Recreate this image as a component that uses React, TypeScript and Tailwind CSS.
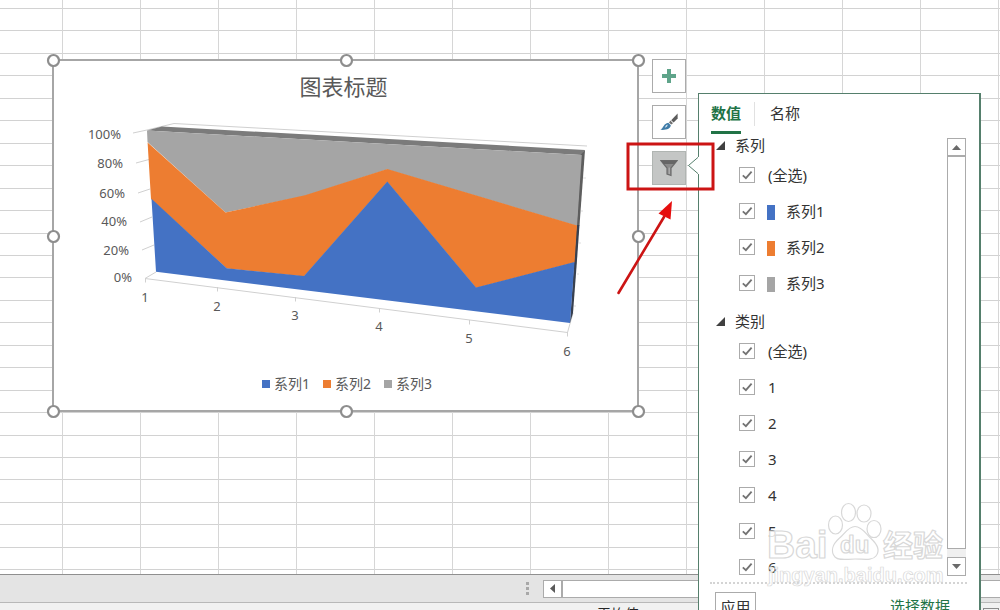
import type { ReactNode } from "react";

const ROW_STEP = 22.45;
const rowEdges = Array.from({ length: 28 }, (_, i) => Math.round(8 + i * ROW_STEP));
const rowHeights = rowEdges.map((edge, i) => (i === 0 ? edge + 1 : edge - rowEdges[i - 1]));
const columns = Array.from({ length: 24 }, (_, i) => i);

function Gridlines() {
  return (
    <div aria-hidden="true" className="absolute inset-0 overflow-hidden">
      {rowHeights.map((height, i) => (
        <div key={i} className="border-b border-[#d2d2d2]" style={{ height }} />
      ))}
      <div className="absolute inset-0 flex">
        <div className="w-[63px] shrink-0 border-r border-[#d6d6d6]" />
        {columns.map((c) => (
          <div key={c} className="w-[78px] shrink-0 border-r border-[#d6d6d6]" />
        ))}
      </div>
    </div>
  );
}

const valueLabels = [
  { text: "100%", x: 121, y: 139 },
  { text: "80%", x: 123, y: 168 },
  { text: "60%", x: 125, y: 198 },
  { text: "40%", x: 127, y: 226 },
  { text: "20%", x: 129, y: 255 },
  { text: "0%", x: 132, y: 282 },
];

const categoryLabels = [
  { text: "1", x: 145, y: 302, tick: 278 },
  { text: "2", x: 217, y: 311, tick: 287 },
  { text: "3", x: 295, y: 320, tick: 297 },
  { text: "4", x: 379, y: 331, tick: 308 },
  { text: "5", x: 469, y: 343, tick: 320 },
  { text: "6", x: 567, y: 356, tick: 332 },
];

const handles = [
  [53, 60], [346, 60], [638, 60],
  [53, 236], [638, 236],
  [53, 411], [346, 411], [638, 411],
];

const legend = [
  { name: "系列1", color: "bg-[#4472c4]" },
  { name: "系列2", color: "bg-[#ed7d31]" },
  { name: "系列3", color: "bg-[#a5a5a5]" },
];

function Chart() {
  return (
    <section
      aria-label="图表标题"
      className="absolute left-[52px] top-[59px] flex h-[353px] w-[587px] flex-col items-center justify-between border-2 border-[#a6a6a6] bg-white pt-[7px] pb-4 text-[#595959]"
    >
      <h1 className="pr-1 text-[22px] leading-9">图表标题</h1>
      <ul className="flex gap-[13px] pl-[3px] text-sm leading-5">
        {legend.map((item) => (
          <li key={item.name} className="flex items-center gap-1">
            <span className={`size-2 ${item.color}`} />
            {item.name}
          </li>
        ))}
      </ul>
      <svg
        viewBox="40 50 610 372"
        className="absolute -left-[14px] -top-[11px] h-[372px] w-[610px]"
        fill="none"
      >
        <g stroke="#d0d0d0">
          <path d="M133 133L147 130L174 123.5L587 146" />
          <path d="M136 163L149 159.5M138 193L150 189M140 222L152 217M142 250L154 245" />
          <path d="M156 272L145 278.5L567.5 332.5L573 313" />
          <path d="M583 178h3M581 211h2M579 243h2M577 274h2M574 306h2" strokeOpacity=".7" />
          {categoryLabels.map((c) => (
            <path key={c.text} d={`M${c.x + 0.5} ${c.tick}v4.5`} />
          ))}
        </g>
        <path d="M147 130.5L162 126.5L585 150L581.5 155Z" fill="#7b7b7b" />
        <path d="M585 150L579.5 225.5H576.5L581 154.5Z" fill="#5e5e5e" />
        <path d="M579.5 225L576.8 263L573 313L570 323L574 262L576.5 225Z" fill="#38404f" />
        <path d="M147 130.5L581.8 155L577 226L387 169.5L305 196L225.5 212.5L147.5 142Z" fill="#a5a5a5" />
        <path d="M147.6 142.5L225.5 212.5L305 195.3L387.3 169L577 225.5L574.5 262.5L476 288L387.3 182L304 276.5L226.7 268.5L151 199Z" fill="#ed7d31" />
        <path d="M151.5 198.8L226.7 268.3L304 276L387.3 181.5L476 287.5L574.5 262L570 323L156 271.8Z" fill="#4472c4" />
        <g fill="#595959" fontSize="13">
          {valueLabels.map((v) => (
            <text key={v.text} x={v.x} y={v.y} textAnchor="end">{v.text}</text>
          ))}
          {categoryLabels.map((c) => (
            <text key={c.text} x={c.x} y={c.y} textAnchor="middle">{c.text}</text>
          ))}
        </g>
        {handles.map(([x, y]) => (
          <circle key={`${x}-${y}`} cx={x + 0.5} cy={y + 0.5} r="5.5" fill="#fff" stroke="#8e8e8e" strokeWidth="2.2" />
        ))}
      </svg>
    </section>
  );
}

function ChartButton({ label, active, children }: { label: string; active?: boolean; children: ReactNode }) {
  return (
    <button
      type="button"
      aria-label={label}
      aria-pressed={active ?? false}
      className={`flex size-[34px] items-center justify-center border ${
        active ? "border-[#b0b5b2] bg-[#c4c6c5]" : "border-[#ababab] bg-white"
      }`}
    >
      {children}
    </button>
  );
}

function ChartButtons() {
  return (
    <div className="absolute left-[652px] top-[59px] flex flex-col gap-3">
      <ChartButton label="图表元素">
        <svg viewBox="0 0 14 14" className="size-[14px]">
          <path d="M5 0h4v5h5v4H9v5H5V9H0V5h5z" fill="#5fa48a" />
        </svg>
      </ChartButton>
      <ChartButton label="图表样式">
        <svg viewBox="0 0 18 18" className="size-[18px]">
          <path d="M17.6 .6V5.5L13.6 9.6L11.2 7.2Z" fill="#5c5c5c" />
          <path d="M10.4 7.6L13 10.2L11.2 11.6L9 9.4Z" fill="#6f6f6f" />
          <path d="M8.3 9.8L10.8 12.3C10.6 15.6 6.5 17.3 .4 16.8C3.4 15.4 3.6 10.4 8.3 9.8Z" fill="#3f7ca8" />
          <path d="M7.6 11.6C5.8 12 5.4 13.6 4.8 14.8C6.4 14.4 7.8 13.4 7.6 11.6Z" fill="#cfe0ec" />
        </svg>
      </ChartButton>
      <ChartButton label="图表筛选器" active>
        <svg viewBox="0 0 18 18" className="size-[18px]">
          <path d="M.8 1.5H17.2L11 9V16.5L7 15V9Z" fill="#8a8a8a" stroke="#6c6c6c" strokeWidth="1.2" />
          <path d="M1 1.5H17L14.5 5H3.5Z" fill="#666" />
          <path d="M9.2 8.5V15" stroke="#b8b8b8" />
        </svg>
      </ChartButton>
    </div>
  );
}

type Item = { label: string; swatch?: string };

const seriesItems: Item[] = [
  { label: "(全选)" },
  { label: "系列1", swatch: "bg-[#4472c4]" },
  { label: "系列2", swatch: "bg-[#ed7d31]" },
  { label: "系列3", swatch: "bg-[#a5a5a5]" },
];

const categoryItems: Item[] = ["(全选)", "1", "2", "3", "4", "5", "6"].map((label) => ({ label }));

function CheckRow({ item }: { item: Item }) {
  return (
    <label className="flex h-9 items-center">
      <span className="mb-px grid size-4 place-items-center">
        <input
          type="checkbox"
          defaultChecked
          className="peer col-start-1 row-start-1 size-4 appearance-none border border-[#ababab] bg-white"
        />
        <svg
          viewBox="0 0 16 16"
          className="pointer-events-none invisible col-start-1 row-start-1 size-4 peer-checked:visible"
        >
          <path d="M3.8 8.4L6.9 11.2L12.6 4.6" fill="none" stroke="#737373" strokeWidth="1.8" />
        </svg>
      </span>
      {item.swatch && <span className={`ml-3 mt-[3px] h-[15px] w-2 ${item.swatch}`} />}
      <span className={item.swatch ? "ml-[11px]" : "ml-[13px]"}>{item.label}</span>
    </label>
  );
}

function FilterGroup({ title, items }: { title: string; items: Item[] }) {
  return (
    <fieldset className="mb-2">
      <legend className="flex h-6 items-center gap-[10px] pl-[6px]">
        <svg viewBox="0 0 9 9" className="size-[9px]">
          <path d="M9 0V9H0Z" fill="#404040" />
        </svg>
        {title}
      </legend>
      <div className="pl-[29px]">
        {items.map((item) => (
          <CheckRow key={item.label} item={item} />
        ))}
      </div>
    </fieldset>
  );
}

function FilterPanel() {
  return (
    <aside className="absolute left-[698px] top-[93px] h-[560px] w-[283px] border border-r-2 border-[#557f6c] bg-white px-[11px] text-[15px] text-[#333]">
      <div role="tablist" className="flex h-10 items-stretch">
        <button type="button" role="tab" aria-selected="true" className="mx-px border-b-[3px] border-[#217346] pt-px font-bold text-[#217346]">
          数值
        </button>
        <span className="mx-3 my-2 w-px bg-[#e1e1e1]" />
        <button type="button" role="tab" aria-selected="false" className="ml-[3px] border-b-[3px] border-transparent pt-px">
          名称
        </button>
      </div>
      <div className="mr-px flex h-[450px] justify-between overflow-hidden border-b-2 border-dotted border-[#d4d4d4]">
        <div className="-mt-px">
          <FilterGroup title="系列" items={seriesItems} />
          <FilterGroup title="类别" items={categoryItems} />
        </div>
        <div className="mr-px mt-1 mb-[6px] flex w-[19px] flex-col bg-[#f0f0f0]">
          <button type="button" aria-label="向上滚动" className="grid h-[18px] shrink-0 place-items-center border border-[#ababab] bg-white">
            <svg viewBox="0 0 9 5" className="h-[5px] w-[9px]"><path d="M4.5 0L9 5H0Z" fill="#6a6a6a" /></svg>
          </button>
          <div className="mb-2 flex-1 border border-[#ababab] bg-white" />
          <button type="button" aria-label="向下滚动" className="grid h-[19px] shrink-0 place-items-center border border-[#ababab] bg-white">
            <svg viewBox="0 0 9 5" className="h-[5px] w-[9px]"><path d="M4.5 5L9 0H0Z" fill="#6a6a6a" /></svg>
          </button>
        </div>
      </div>
      <div className="flex items-start justify-between pl-[5px] pr-[18px] pt-2">
        <button type="button" className="h-[30px] w-[41px] border border-[#ababab] bg-white">应用</button>
        <a href="#select-data" className="pt-[3px] text-[#217346]">选择数据</a>
      </div>
    </aside>
  );
}

function Watermark() {
  return (
    <svg
      aria-hidden="true"
      viewBox="760 495 190 95"
      className="pointer-events-none absolute left-[760px] top-[495px] h-[95px] w-[190px]"
      fill="#fff"
      fillOpacity=".85"
      stroke="#d8d8d8"
      strokeWidth="1.2"
      strokeLinejoin="round"
    >
      <g className="font-['Liberation_Sans','Noto_Sans_CJK_SC',sans-serif] font-bold">
        <text x="767" y="558" fontSize="39">Bai</text>
        <ellipse cx="835.5" cy="525" rx="7" ry="9" />
        <ellipse cx="848.5" cy="512.5" rx="7" ry="9" />
        <ellipse cx="864" cy="513.5" rx="7" ry="8.5" />
        <ellipse cx="874" cy="529" rx="7" ry="8.5" />
        <path d="M855 526.5C862 526.5 866 534 871 538.5C878 545 880 551 876 556C872 561 864 559 855 559C846 559 839 561 835 557C830 551 833 544 839 538.5C845 534 848 526.5 855 526.5Z" />
        <text x="840" y="553" fontSize="24">du</text>
        <text x="883" y="556" fontSize="30">经验</text>
        <text x="768" y="582" fontSize="20" strokeWidth=".7">jingyan.baidu.com</text>
      </g>
    </svg>
  );
}

function Callouts() {
  return (
    <svg
      aria-hidden="true"
      viewBox="610 140 110 160"
      className="pointer-events-none absolute left-[610px] top-[140px] h-[160px] w-[110px]"
      fill="none"
    >
      <path d="M699 156.5L688.5 165.5L699 174.5" fill="#fff" stroke="#557f6c" />
      <path d="M699 157V174" stroke="#fff" strokeWidth="2" />
      <rect x="628" y="144" width="85" height="45" stroke="#cc1414" strokeWidth="3" />
      <path d="M618.5 293L664 217" stroke="#cc1414" strokeWidth="2.6" strokeLinecap="round" />
      <path d="M672 201L658.5 213.5L670.5 219.5Z" fill="#e60e0e" />
    </svg>
  );
}

export default function App() {
  return (
    <div className="relative flex h-screen flex-col overflow-hidden bg-white font-['Noto_Sans','Noto_Sans_CJK_SC',sans-serif]">
      <main className="relative flex-1">
        <Gridlines />
        <Chart />
        <ChartButtons />
      </main>
      <div className="flex h-7 shrink-0 items-center border-t border-[#8f8f8f] bg-[#e4e4e4] pl-[526px]">
        <div className="flex w-[17px] shrink-0 flex-col gap-[2px]">
          <span className="size-[3px] bg-[#a8a8a8]" />
          <span className="size-[3px] bg-[#a8a8a8]" />
          <span className="size-[3px] bg-[#a8a8a8]" />
        </div>
        <button type="button" aria-label="向左滚动" className="grid h-[18px] w-[19px] shrink-0 place-items-center border border-[#ababab] bg-white">
          <svg viewBox="0 0 5 9" className="h-[9px] w-[5px]"><path d="M0 4.5L5 0V9Z" fill="#5a5a5a" /></svg>
        </button>
        <div className="h-[18px] flex-1 border-y border-l border-[#ababab] bg-white" />
      </div>
      <footer className="flex h-2 shrink-0 items-start overflow-hidden border-t border-[#b8b8b8] bg-[#f1f1f1] pl-[597px] text-sm leading-5 text-[#262626]">
        <span className="pt-px">平均值</span>
        <span className="ml-auto mr-px mt-[5px] h-3 w-4 border border-[#8a8a8a]" />
      </footer>
      <FilterPanel />
      <Callouts />
      <Watermark />
    </div>
  );
}
